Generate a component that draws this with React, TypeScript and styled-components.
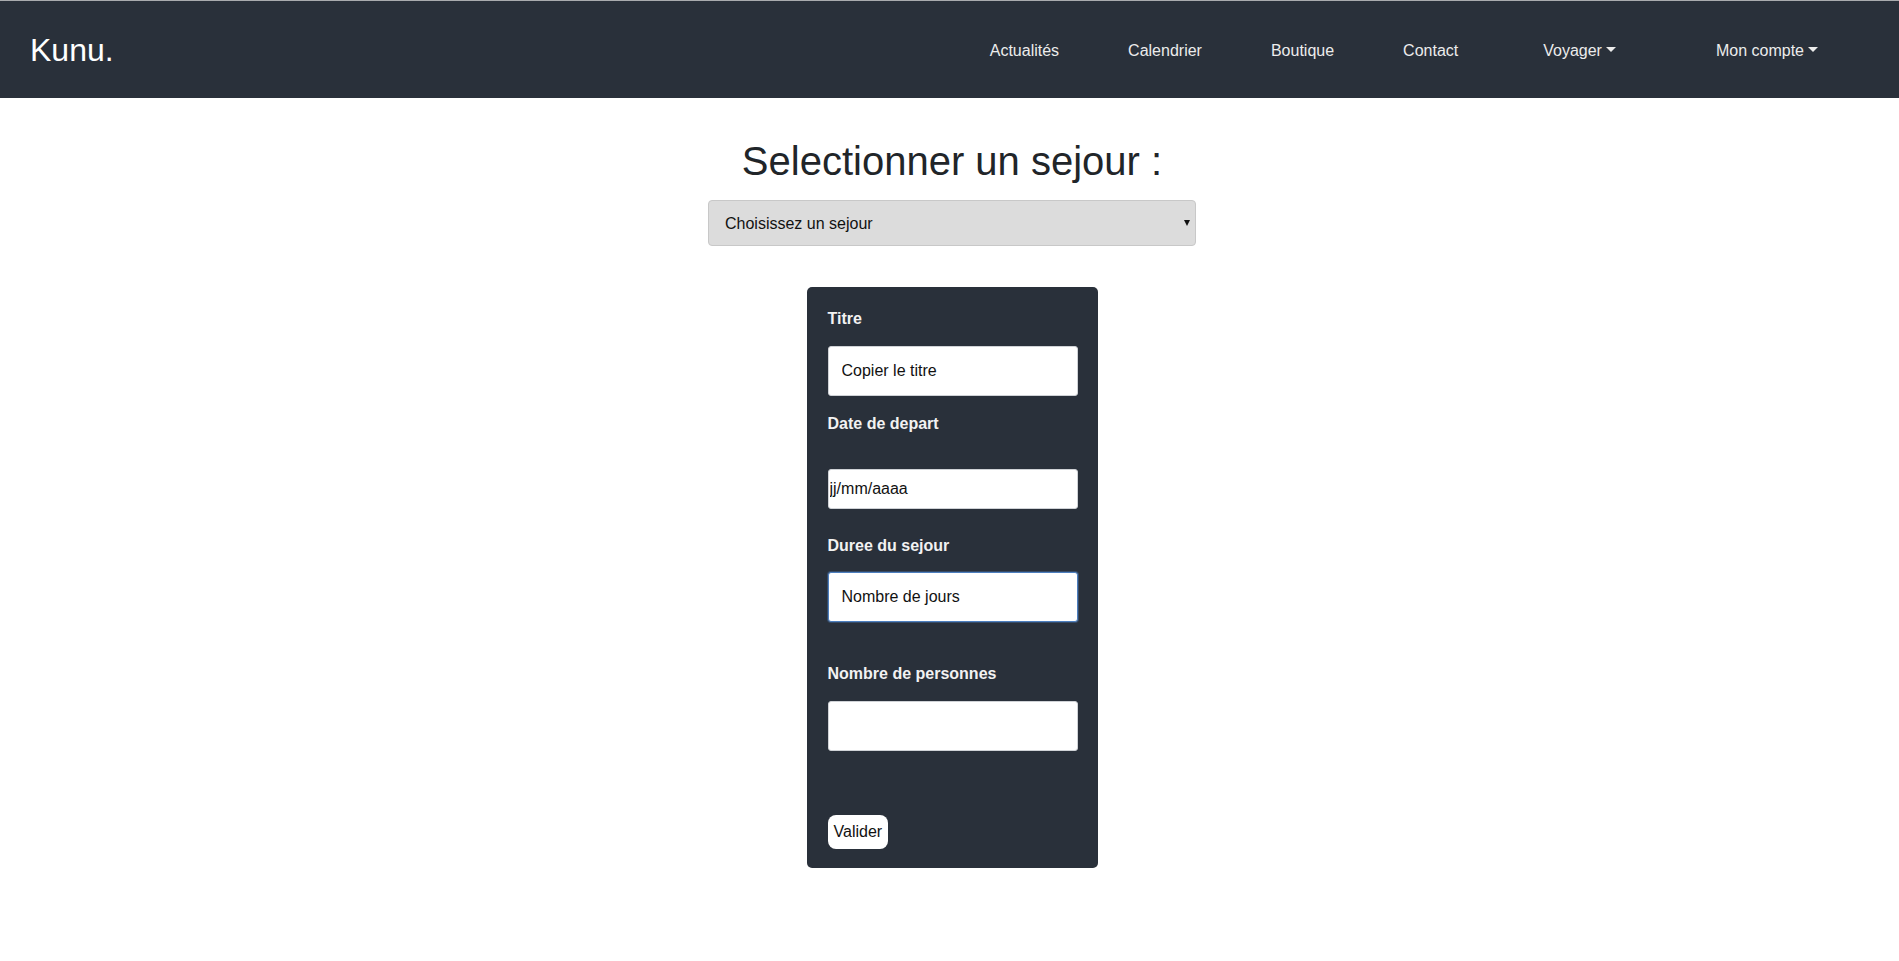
import React from "react";
import styled, { createGlobalStyle } from "styled-components";

const GlobalStyle = createGlobalStyle`
  html, body {
    margin: 0;
    padding: 0;
    background: #ffffff;
    font-family: "Liberation Sans", Arial, Helvetica, sans-serif;
    color: #212529;
  }
  * { box-sizing: border-box; }
`;

const NavBar = styled.header`
  height: 98px;
  background: #29303a;
  border-top: 1px solid #a9abae;
  display: flex;
  align-items: center;
  padding: 0 81px 0 30px;
`;

const Brand = styled.a`
  font-size: 32px;
  line-height: 1;
  color: #ffffff;
  text-decoration: none;
  margin-right: auto;
`;

const NavList = styled.nav`
  display: flex;
  align-items: center;
  gap: 69px;
  margin-top: 2px;
`;

const NavLink = styled.a<{ $extra?: number }>`
  font-size: 16px;
  line-height: 24px;
  color: #ececec;
  text-decoration: none;
  display: inline-flex;
  align-items: center;
  margin-left: ${(p) => p.$extra ?? 0}px;
`;

const Caret = styled.span`
  display: inline-block;
  margin-left: 4px;
  width: 0;
  height: 0;
  border-top: 5px solid #ececec;
  border-left: 5px solid transparent;
  border-right: 5px solid transparent;
  transform: translateY(-1px);
`;

const Main = styled.main`
  display: flex;
  flex-direction: column;
  align-items: center;
  padding: 39px 0 40px 5px;
`;

const Title = styled.h1`
  margin: 0 0 15px;
  font-size: 40px;
  line-height: 48px;
  font-weight: 400;
  color: #212529;
`;

const SelectWrap = styled.div`
  position: relative;
  width: 488px;
  margin-bottom: 41px;
`;

const Select = styled.select`
  appearance: none;
  -webkit-appearance: none;
  width: 100%;
  height: 46px;
  padding: 0 30px 0 16px;
  background: #dcdcdc;
  border: 1px solid #c8c8c8;
  border-radius: 4px;
  font-family: "Liberation Sans", Arial, sans-serif;
  font-size: 16px;
  color: #111;
  outline: none;
`;

const SelectArrow = styled.span`
  position: absolute;
  right: 6px;
  top: 20px;
  width: 0;
  height: 0;
  border-top: 6px solid #111;
  border-left: 3px solid transparent;
  border-right: 3px solid transparent;
  pointer-events: none;
`;

const Card = styled.form`
  width: 291px;
  background: #29303a;
  border-radius: 5px;
  padding: 20px 20px 19px 21px;
  display: flex;
  flex-direction: column;
  align-items: flex-start;
`;

const Label = styled.label<{ $mb: number }>`
  display: block;
  font-size: 16px;
  line-height: 24px;
  font-weight: 700;
  color: #f2f2f2;
  margin-bottom: ${(p) => p.$mb}px;
`;

const Input = styled.input<{ $h: number; $mb: number; $pad: number }>`
  display: block;
  width: 250px;
  height: ${(p) => p.$h}px;
  margin-bottom: ${(p) => p.$mb}px;
  padding: 0 8px 0 ${(p) => p.$pad}px;
  background: #ffffff;
  border: 1px solid #cfd2d6;
  border-radius: 3px;
  font-family: "Liberation Sans", Arial, sans-serif;
  font-size: 16px;
  color: #111;
  outline: none;
  &::placeholder { color: #111; opacity: 1; }
  &:focus {
    border-color: #4d7fbf;
    box-shadow: 0 0 0 1px rgba(77, 127, 191, 0.35);
  }
`;

const Button = styled.button`
  height: 34px;
  padding: 0 6px;
  background: #ffffff;
  border: none;
  border-radius: 8px;
  font-family: "Liberation Sans", Arial, sans-serif;
  font-size: 16px;
  color: #111;
  cursor: pointer;
`;

export default function App() {
  return (
    <>
      <GlobalStyle />
      <NavBar>
        <Brand href="#">Kunu.</Brand>
        <NavList>
          <NavLink href="#">Actualités</NavLink>
          <NavLink href="#">Calendrier</NavLink>
          <NavLink href="#">Boutique</NavLink>
          <NavLink href="#">Contact</NavLink>
          <NavLink href="#" $extra={16}>
            Voyager<Caret />
          </NavLink>
          <NavLink href="#" $extra={31}>
            Mon compte<Caret />
          </NavLink>
        </NavList>
      </NavBar>
      <Main>
        <Title>Selectionner un sejour :</Title>
        <SelectWrap>
          <Select defaultValue="">
            <option value="">Choisissez un sejour</option>
          </Select>
          <SelectArrow />
        </SelectWrap>
        <Card onSubmit={(e) => e.preventDefault()}>
          <Label $mb={15}>Titre</Label>
          <Input $h={50} $mb={16} $pad={13} type="text" defaultValue="Copier le titre" />
          <Label $mb={33}>Date de depart</Label>
          <Input $h={40} $mb={25} $pad={1} type="text" defaultValue="jj/mm/aaaa" />
          <Label $mb={14}>Duree du sejour</Label>
          <Input $h={50} $mb={40} $pad={13} type="text" placeholder="Nombre de jours" autoFocus />
          <Label $mb={15}>Nombre de personnes</Label>
          <Input $h={50} $mb={64} $pad={13} type="text" />
          <Button type="submit">Valider</Button>
        </Card>
      </Main>
    </>
  );
}
